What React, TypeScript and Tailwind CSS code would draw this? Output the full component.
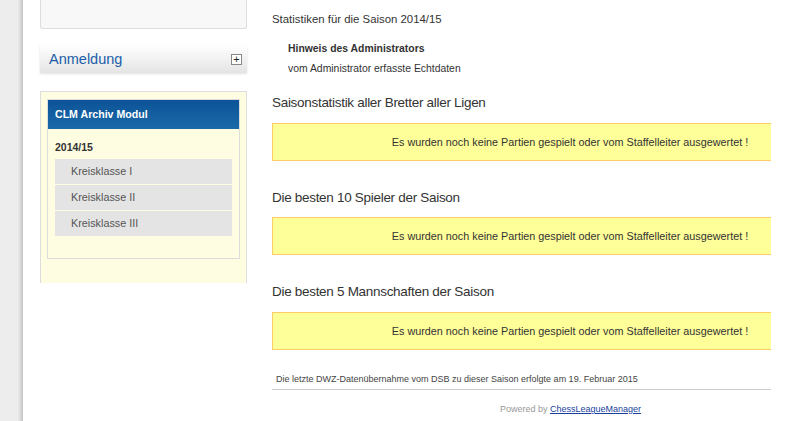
import React from "react";

const font = { fontFamily: '"Liberation Sans", Arial, sans-serif' };

function NoGames() {
  return (
    <div className="w-[499px] overflow-hidden">
      <div className="w-[596px] h-[38px] bg-[#ffff99] border border-[#ffcc66] flex items-center justify-center text-[10.8px] text-[#333]">
        Es wurden noch keine Partien gespielt oder vom Staffelleiter ausgewertet !
      </div>
    </div>
  );
}

export default function App() {
  const leagues = ["Kreisklasse I", "Kreisklasse II", "Kreisklasse III"];
  return (
    <div className="flex w-[800px] h-[421px] overflow-hidden bg-white" style={font}>
      <div className="w-[23px] shrink-0 bg-gradient-to-r from-[#ededed] from-[78%] to-[#c4c4c4]" />

      {/* sidebar */}
      <aside className="w-[207px] ml-[17px] shrink-0 flex flex-col">
        <div className="h-[29px] bg-[#f8f8f8] border border-t-0 border-[#dddddd] rounded-b-[3px]" />

        <div className="mt-[16px] h-[28px] bg-gradient-to-b from-white to-[#e4e4e4] shadow-[0_1px_2px_rgba(0,0,0,0.12)] flex items-center justify-between pl-[9px] pr-[5px]">
          <span className="text-[14.5px] text-[#1c5ea8] pt-[2px]">Anmeldung</span>
          <span className="w-[11px] h-[11px] border border-[#888] bg-white flex items-center justify-center text-[11px] leading-none text-[#222]">
            +
          </span>
        </div>

        <div className="mt-[18px] h-[192px] bg-[#fefde2] border border-[#dddddd] border-b-0 pt-[7px] px-[6px]">
          <div className="h-[160px] border border-[#dddddd]">
            <div className="h-[29px] bg-gradient-to-b from-[#0c5397] to-[#1b6aa9] flex items-center px-[7px] text-[10.6px] font-bold text-white">
              CLM Archiv Modul
            </div>
            <div className="px-[7px]">
              <div className="pt-[11px] pb-[5px] text-[10.5px] leading-[14px] font-bold text-[#333]">2014/15</div>
              <ul className="flex flex-col gap-px">
                {leagues.map((l) => (
                  <li
                    key={l}
                    className="h-[25px] bg-[#e4e4e4] flex items-center pl-[16px] text-[10.8px] text-[#555]"
                  >
                    {l}
                  </li>
                ))}
              </ul>
            </div>
          </div>
        </div>
      </aside>

      {/* main */}
      <main className="ml-[25px] w-[499px] shrink-0 text-[#333]">
        <p className="mt-[12px] text-[11.4px] leading-[14px]">Statistiken für die Saison 2014/15</p>
        <div className="pl-[16px] mt-[16px]">
          <p className="text-[10.4px] leading-[14px] font-bold">Hinweis des Administrators</p>
          <p className="mt-[6px] text-[10.4px] leading-[14px]">vom Administrator erfasste Echtdaten</p>
        </div>

        <h2 className="mt-[18px] text-[13.5px] leading-[18px] tracking-[-0.3px]">
          Saisonstatistik aller Bretter aller Ligen
        </h2>
        <div className="mt-[11px]">
          <NoGames />
        </div>

        <h2 className="mt-[28px] text-[13.5px] leading-[18px] tracking-[-0.3px]">
          Die besten 10 Spieler der Saison
        </h2>
        <div className="mt-[10px]">
          <NoGames />
        </div>

        <h2 className="mt-[28px] text-[13.5px] leading-[18px] tracking-[-0.3px]">
          Die besten 5 Mannschaften der Saison
        </h2>
        <div className="mt-[11px]">
          <NoGames />
        </div>

        <p className="mt-[23px] pl-[4px] text-[9px] leading-[13px] text-[#444]">
          Die letzte DWZ-Datenübernahme vom DSB zu dieser Saison erfolgte am 19. Februar 2015
        </p>
        <div className="mt-[3px] h-px bg-[#cccccc]" />
        <p className="mt-[13px] text-center text-[9px] leading-[13px] pl-[98px] text-[#999]">
          Powered by{" "}
          <a href="#" className="text-[#1a3f9c] underline">
            ChessLeagueManager
          </a>
        </p>
      </main>
    </div>
  );
}
